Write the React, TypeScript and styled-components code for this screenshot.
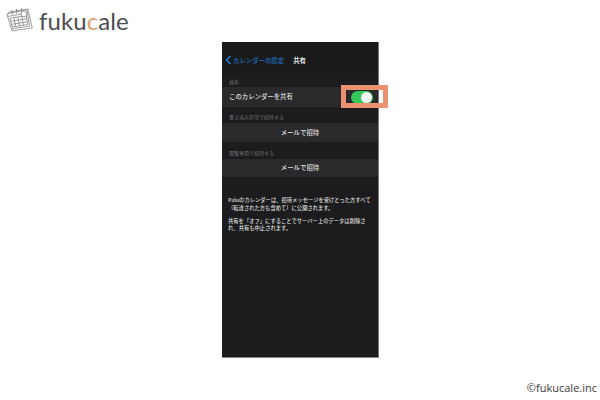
import React from "react";
import styled, { createGlobalStyle } from "styled-components";

const Global = createGlobalStyle`
  html, body { margin: 0; padding: 0; background: #fff; }
  body { font-family: "Noto Sans CJK JP", "Liberation Sans", sans-serif; }
`;
const Page = styled.div`
  width: 600px; height: 400px; display: flex; flex-direction: column; overflow: hidden; background: #fff;
`;
const Header = styled.header`
  height: 42px; display: flex; align-items: flex-start; gap: 5px; padding: 6px 0 0 6px; box-sizing: border-box;
`;
const Brand = styled.div`
  font-family: "Lato", "Liberation Sans", sans-serif; font-size: 24px; line-height: 28px; color: #4d4d4f; letter-spacing: 0.1px; margin-top: 1px;
`;
const Accent = styled.span` color: #dd9f6f; `;
const Phone = styled.main`
  width: 156px; height: 316px; align-self: center; background: #1c1c1e; display: flex; flex-direction: column; flex-shrink: 0;
  border-bottom: 1px solid #8a8a8a; box-sizing: border-box; box-shadow: 1px 0 0 #777; color: #e8e8e8;
`;
const Nav = styled.div`
  height: 33px; background: #1a1a1b; display: flex; align-items: flex-end; padding: 0 0 10px 3px; box-sizing: border-box; gap: 9px; font-size: 6.4px; line-height: 9px;
`;
const Back = styled.div` display: flex; align-items: center; gap: 1px; color: #1f74c4; font-weight: 500; `;
const Title = styled.div` color: #e4e4e4; font-weight: 700; `;
const Section = styled.div<{ $top: number; $gap: number }>`
  margin: ${p => p.$top}px 0 ${p => p.$gap}px; padding-left: 7px; height: 8px; font-size: 5px; line-height: 8px; color: #77777a;
`;
const Row = styled.div<{ $h: number; $center?: boolean }>`
  position: relative; height: ${p => p.$h}px; background: #2a2a2c; display: flex; align-items: center;
  justify-content: ${p => (p.$center ? "center" : "space-between")};
  padding: 0 ${p => (p.$center ? 0 : 5)}px 0 ${p => (p.$center ? 0 : 7)}px; box-sizing: border-box; font-size: 6.4px; line-height: 10px; font-weight: 500; color: #e0e0e0;
`;
const Toggle = styled.div`
  width: 22px; height: 13px; border-radius: 6.5px; background: #34c85a; position: relative;
`;
const Knob = styled.div`
  position: absolute; right: 1px; top: 1px; width: 11px; height: 11px; border-radius: 50%; background: #f4f8f2;
`;
const Highlight = styled.div`
  position: absolute; right: -15px; top: -6px; width: 47px; height: 23px; box-sizing: border-box; border: 5px solid #ec9270;
`;
const Note = styled.div`
  margin-top: 20px; padding: 0 6px 0 6px; font-size: 5.3px; line-height: 7.5px; font-weight: 500; color: #dcdcdc;
`;
const NotePara = styled.p` margin: 0 0 5.5px; `;
const Footer = styled.footer`
  flex: 1; display: flex; justify-content: flex-end; align-items: flex-end; padding: 0 3px 5px 0;
  font-family: "Open Sans", "Liberation Sans", sans-serif; font-size: 11px; line-height: 15px; color: #3a3a3a;
`;

const CalendarIcon = () => (
  <svg width="28" height="28" viewBox="0 0 32 30" fill="none" stroke="#858587" strokeWidth="0.9" strokeLinejoin="round">
    <path d="M3 6 L25 2.5 L30 24 L7 27.5 Z" fill="#fff" />
    <path d="M1 8 L24 3 L27 22 L6 25 Z" fill="#fff" />
    <path d="M1.5 11 L24.5 7" />
    <path d="M7 3.5v5M12 2.5v5M18 1.5v5" strokeWidth="1.1" />
    <path d="M4.5 13 L23 10 L25 20 L7 23 Z" />
    <path d="M9 12.3 L11 22.4 M13.5 11.6 L15.5 21.7 M18 10.8 L20 21 M5.5 16.5 L24 13.4 M6.2 20 L24.6 17" />
    <circle cx="20.5" cy="8" r="3.4" fill="#fff" />
  </svg>
);

export default function App() {
  return (
    <Page>
      <Global />
      <Header>
        <CalendarIcon />
        <Brand>fuku<Accent>c</Accent>ale</Brand>
      </Header>
      <Phone>
        <Nav>
          <Back>
            <svg width="7" height="10" viewBox="0 0 7 10" fill="none" stroke="#2a86dc" strokeWidth="1.4"><path d="M5.5 1 L1.5 5 L5.5 9" /></svg>
            カレンダーの設定
          </Back>
          <Title>共有</Title>
        </Nav>
        <Section $top={3} $gap={1}>共有</Section>
        <Row $h={20}>
          このカレンダーを共有
          <Toggle>
            <Knob />
            <Highlight />
          </Toggle>
        </Row>
        <Section $top={6} $gap={2}>書き込み許可で招待する</Section>
        <Row $h={19} $center>メールで招待</Row>
        <Section $top={7} $gap={2}>閲覧専用で招待する</Section>
        <Row $h={18} $center>メールで招待</Row>
        <Note>
          <NotePara>Paluのカレンダーは、招待メッセージを受けとった方すべて（転送された方も含めて）に公開されます。</NotePara>
          <NotePara>共有を「オフ」にすることでサーバー上のデータは削除され、共有も中止されます。</NotePara>
        </Note>
      </Phone>
      <Footer>©fukucale.inc</Footer>
    </Page>
  );
}
